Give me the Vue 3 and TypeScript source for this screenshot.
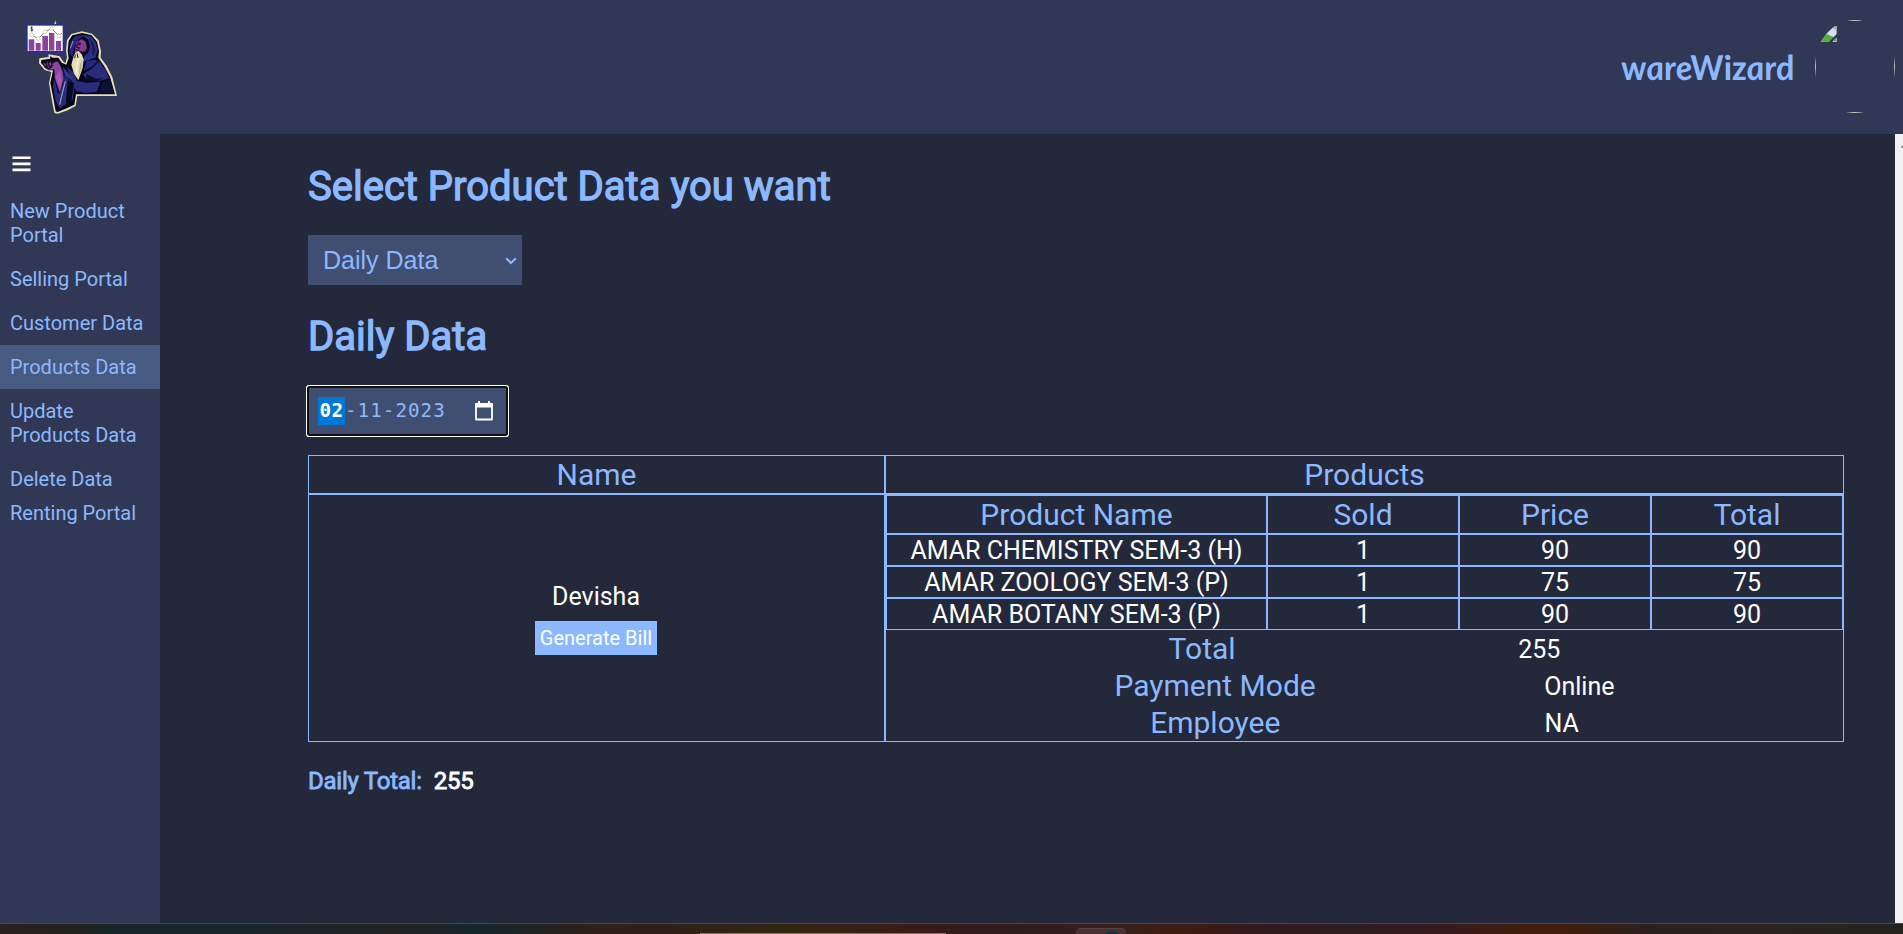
<script setup lang="ts">
import { ref } from 'vue'

interface NavItem {
  label: string
  active?: boolean
  compact?: boolean
}

interface ProductRow {
  name: string
  sold: number
  price: number
  total: number
}

const nav: NavItem[] = [
  { label: 'New Product Portal' },
  { label: 'Selling Portal' },
  { label: 'Customer Data' },
  { label: 'Products Data', active: true },
  { label: 'Update Products Data' },
  { label: 'Delete Data' },
  { label: 'Renting Portal', compact: true },
]

const range = ref('Daily Data')
const columns: string[] = ['Product Name', 'Sold', 'Price', 'Total']
const rows: ProductRow[] = [
  { name: 'AMAR CHEMISTRY SEM-3 (H)', sold: 1, price: 90, total: 90 },
  { name: 'AMAR ZOOLOGY SEM-3 (P)', sold: 1, price: 75, total: 75 },
  { name: 'AMAR BOTANY SEM-3 (P)', sold: 1, price: 90, total: 90 },
]
const summary: [string, string][] = [
  ['Total', '255'],
  ['Payment Mode', 'Online'],
  ['Employee', 'NA'],
]
</script>

<template>
  <div class="screen">
    <header class="topbar">
      <svg class="logo" viewBox="0 0 480 420" width="160" height="140">
        <!-- chart board -->
        <path d="M78 72h117v92H108l-30-6z" fill="#2e3180" />
        <rect x="83" y="77" width="105" height="76" fill="#fff" />
        <g fill="#8a449c">
          <rect x="86" y="118" width="17" height="34" />
          <rect x="107" y="129" width="15" height="23" />
          <rect x="127" y="108" width="17" height="44" />
          <rect x="147" y="99" width="16" height="53" />
          <rect x="168" y="123" width="15" height="29" />
        </g>
        <path d="M95 105l20 11 20-21 20-9 22 22 9-9" fill="none" stroke="#343a55" stroke-width="2" />
        <g fill="#fff" stroke="#d9d3ae" stroke-width="3">
          <circle cx="95" cy="104" r="5.500" /><circle cx="115" cy="116" r="5.500" />
          <circle cx="135" cy="95" r="5.500" /><circle cx="155" cy="86" r="5.500" />
          <circle cx="177" cy="108" r="5.500" />
        </g>
        <path d="M98 82h-5v4l5 2v4h-6M95 79v15" fill="none" stroke="#24305c" stroke-width="2.500" />
        <path d="M163 72l3-11 3 11z" fill="#d9d3ae" />
        <!-- cream outline -->
        <path d="M196 190L201 172 198 152 201 120 214 102 246 94 276 101 296 121 303 153 302 173 320 197 337 231 351 288H232L227 318 203 331 173 341 163 339 156 303 147 250 154 216 134 210 117 190 118 175 146 171 145 163 164 166 179 169 189 184z" fill="#e6dfb6" />
        <!-- robe -->
        <path d="M199 194L206 175 203 153 206 123 217 106 246 99 274 105 291 125 297 153 295 173 312 197 330 230 345 283H228L223 314 200 325 173 336 167 334 160 295 151 249 159 211 137 205 123 189 124 180 151 176 150 168 158 173 175 173 185 188z" fill="#05061a" />
        <path d="M207 157l5-32 13-17 29-3-19 14-14 26-4 28z" fill="#23277a" />
        <path d="M246 104l27 5 14 18 6 24-7 22-24 8-12 5 3-18 11-9 6-18-5-22-20-14z" fill="#2c2f86" />
        <path d="M266 112l14 17 6 24-9 17 1-28z" fill="#151846" />
        <path d="M298 184l18 25 12 26-24 7-45-3-10-16 28-19z" fill="#292c7d" />
        <path d="M260 182l26-3 8 4-18 17-26 14z" fill="#23277a" />
        <path d="M331 238l11 42h-44l9-33z" fill="#0c1032" />
        <path d="M200 200l19 15 12 28 29 5 41-3-11 31-35 3-27-5z" fill="#292c7d" />
        <path d="M260 222l28 14 23-1-24 9-30-4z" fill="#0a0c2b" />
        <path d="M163 233l11 48 13-26 4-29 17 13 17 11-7 51-39 24-12-21-8-47z" fill="#292c7d" />
        <path d="M203 241l19 8-8 56-17 7z" fill="#070922" />
        <path d="M196 244l-17 70 8-37z" fill="#a9a6b9" stroke="#a9a6b9" stroke-width="2" />
        <path d="M188 200l18 19 17 27-28-18z" fill="#34368c" />
        <!-- hand and arm -->
        <path d="M130 187l8 3 4-5 5 4 11-9-1 10 12-7 7 3 8 16 6 16 2 18-13 45-16-48-1-24-16 1-12-8z" fill="#8a459f" stroke="#0a0715" stroke-width="2" />
        <path d="M137 188l5 12m2-11l5 12m7-18l-2 18-9 6m-10-8l11 6m3-5l10-4" stroke="#1a0a22" stroke-width="4" fill="none" />
        <path d="M179 213l8 30-7 28-14-41z" fill="#a25bad" />
        <!-- face -->
        <path d="M224 151l5-24 16-10 12 8 4 20-7 10-11-1-17 6z" fill="#873a91" />
        <path d="M228 136l15-5m-11-2l10 1m-14 10l12 5m-14 3l12 4" stroke="#280d3b" stroke-width="4" fill="none" />
        <path d="M221 168l5-10 9-5 10 10 6 15-3 26-13 37-13-20-8-27z" fill="#e3dcb6" />
        <path d="M231 174l8-1-6 29 1 30-8-19z" fill="#f0eacb" />
        <path d="M247 177l-2 27-9 23 3-32z" fill="#bcb699" />
        <path d="M226 164l-2 11m7-15l3 14" stroke="#1a1534" stroke-width="3" />
        <path d="M211 145l8-22" stroke="#9199bc" stroke-width="3" />
      </svg>
      <div class="account">
        <span class="brand">wareWizard</span>
        <div class="avatar">
          <svg width="16" height="16" viewBox="0 0 16 16">
            <path d="M0 0h16v16H0z" fill="#d4def6" />
            <path d="M0 16v-4l6-4 4 2 3 1-4 5z" fill="#55ad3d" />
            <path d="M12.500 0v3.500H16V0z" fill="#aaa" />
            <path d="M15.500 2v14H0" fill="none" stroke="#a3a3a3" />
            <path d="M8.500 17L17 8.500" stroke="#313855" stroke-width="2.500" />
            <path d="M12 15l3-3v3z" fill="#62a855" />
          </svg>
        </div>
      </div>
    </header>

    <div class="body">
      <nav class="sidebar">
        <svg class="burger" width="20" height="18" viewBox="0 0 20 18">
          <path d="M.5 2.800h18M.5 8.900h18M.5 14.900h18" stroke="#fff" stroke-width="2.600" />
        </svg>
        <a v-for="item in nav" :key="item.label" :class="{ active: item.active, compact: item.compact }">{{ item.label }}</a>
      </nav>

      <main class="content">
        <h1>Select Product Data you want</h1>
        <div class="select">
          <span>{{ range }}</span>
          <svg width="12" height="8" viewBox="0 0 12 8">
            <path d="M1.200 1.200L6 6l4.800-4.800" fill="none" stroke="#8cb8ff" stroke-width="2" />
          </svg>
        </div>
        <h1 class="second">{{ range }}</h1>
        <div class="date">
          <span class="day">02</span><span class="rest">-11-2023</span>
          <svg width="18" height="20" viewBox="0 0 18 20">
            <path d="M1 3h16v15.500H1z" fill="none" stroke="#fff" stroke-width="1.800" stroke-linejoin="round" />
            <path d="M.5 2h17v4.500H.5zM3 0h2v3H3zM13 0h2v3h-2z" fill="#fff" />
          </svg>
        </div>

        <section class="report">
          <div class="cell title">Name</div>
          <div class="cell title">Products</div>
          <div class="cell customer">
            <span>Devisha</span>
            <button type="button">Generate Bill</button>
          </div>
          <div class="cell">
            <div class="line">
              <div v-for="c in columns" :key="c" class="cell title">{{ c }}</div>
            </div>
            <div v-for="r in rows" :key="r.name" class="line item">
              <div class="cell">{{ r.name }}</div>
              <div class="cell">{{ r.sold }}</div>
              <div class="cell">{{ r.price }}</div>
              <div class="cell">{{ r.total }}</div>
            </div>
            <div v-for="[label, value] in summary" :key="label" class="sum">
              <span class="label">{{ label }}</span>
              <span class="value">{{ value }}</span>
            </div>
          </div>
        </section>

        <p class="daily"><span>Daily Total:</span><b>255</b></p>
      </main>

      <div class="scrollbar">
        <svg width="2" height="3" viewBox="0 0 2 3"><path d="M0 3V1.500L2 0v3z" fill="#999" /></svg>
      </div>
    </div>

    <footer class="taskbar">
      <i class="search"></i>
      <i class="app"><i></i></i>
    </footer>
  </div>
</template>

<style>
body {
  overflow: hidden;
}
</style>

<style scoped>
* {
  box-sizing: border-box;
}
.screen {
  display: flex;
  flex-direction: column;
  width: 1903px;
  height: 934px;
  overflow: hidden;
  background: #23283b;
  color: #fff;
  font-family: Roboto, sans-serif;
}
.topbar {
  display: flex;
  justify-content: space-between;
  height: 134px;
  flex: none;
  padding-right: 8px;
  background: #313855;
}
.logo {
  display: block;
}
.account {
  display: flex;
}
.brand {
  margin: 47px 21px 0 0;
  height: 40px;
  line-height: 40px;
  color: #8cb8ff;
  font-family: Lato, sans-serif;
  font-size: 34.200px;
  font-weight: 700;
  font-style: italic;
  transform: skewX(7deg);
}
.avatar {
  position: relative;
  width: 80px;
  height: 93px;
  margin-top: 20px;
  border-radius: 50%;
  overflow: hidden;
}
.avatar::before {
  content: '';
  position: absolute;
  inset: 0;
  border: 1px solid #c5c2bb;
}
.avatar svg {
  display: block;
  margin: 6px;
}
.body {
  display: flex;
  height: 789px;
  flex: none;
}
.sidebar {
  width: 160px;
  flex: none;
  background: #313855;
}
.burger {
  display: block;
  margin: 21px 0 16px 12px;
}
.sidebar a {
  display: block;
  padding: 10px;
  color: #8cb8ff;
  font-size: 20px;
  line-height: 24px;
}
.sidebar a.active {
  background: #475a82;
}
.sidebar a.compact {
  padding: 0 10px;
}
.content {
  flex: 1;
  padding: 28px 0 0 148px;
}
h1 {
  margin: 0;
  height: 48px;
  line-height: 50px;
  color: #8cb8ff;
  font-size: 40px;
  font-weight: 400;
  -webkit-text-stroke: 1.300px #8cb8ff;
}
h1.second {
  margin-top: 27px;
}
.select {
  display: flex;
  align-items: center;
  justify-content: space-between;
  width: 214px;
  height: 50px;
  margin-top: 25px;
  padding: 1px 5px 0 15px;
  background: #404e71;
  color: #8cb8ff;
  font: 25px 'Liberation Sans', sans-serif;
}
.date {
  display: flex;
  align-items: center;
  width: 197px;
  height: 46px;
  margin: 28px 0 0 1px;
  padding-left: 9px;
  background: #404e71;
  box-shadow: 0 0 0 2px #101010, 0 0 0 3px #fff;
  border-radius: 1px;
  color: #8cb8ff;
  font: 19.200px/28px 'DejaVu Sans Mono', monospace;
  white-space: nowrap;
}
.day {
  width: 27px;
  height: 28px;
  padding-left: 1.500px;
  background: #0078d7;
  color: #fff;
  font-weight: 700;
  letter-spacing: 0.540px;
}
.rest {
  width: 101px;
  letter-spacing: 1.050px;
}
.date svg {
  margin-left: 29px;
}
.report {
  display: grid;
  grid-template-columns: 577px 959px;
  width: 1536px;
  margin-top: 21px;
}
.cell {
  border: 1px solid #8cb8ff;
}
.title {
  height: 39px;
  line-height: 37px;
  text-align: center;
  color: #8cb8ff;
  font-size: 30px;
}
.customer {
  display: flex;
  flex-direction: column;
  align-items: center;
  padding: 87px 1px 0 0;
  font-size: 25px;
  line-height: 30px;
}
.customer button {
  width: 122px;
  height: 34px;
  margin-top: 9px;
  padding: 0;
  border: 0;
  background: #8cb8ff;
  color: #fff;
  font: 20px Roboto, sans-serif;
}
.line {
  display: grid;
  grid-template-columns: 381px repeat(3, 192px);
}
.item {
  height: 32px;
  line-height: 32px;
  text-align: center;
  font-size: 25px;
}
.item .cell {
  height: 32px;
}
.sum {
  display: flex;
  align-items: center;
  justify-content: space-evenly;
  height: 37px;
  line-height: 37px;
  font-size: 25px;
}
.sum .label {
  color: #8cb8ff;
  font-size: 30px;
}
.sum .value {
  padding-top: 1px;
}
.daily {
  display: flex;
  gap: 12px;
  margin: 24px 0 0;
  font-size: 24px;
  line-height: 30px;
}
.daily span {
  color: #8cb8ff;
  letter-spacing: -0.250px;
  -webkit-text-stroke: 0.800px #8cb8ff;
}
.daily b {
  font-weight: 400;
  letter-spacing: -0.200px;
  -webkit-text-stroke: 0.800px #fff;
}
.scrollbar {
  width: 8px;
  flex: none;
  background: #f1f1f1;
}
.scrollbar svg {
  display: block;
  margin: 11px 0 0 6px;
}
.taskbar {
  display: flex;
  align-items: flex-end;
  flex: 1;
  border-top: 1px solid #48464a;
  background: linear-gradient(90deg, #2a201f 0, #20221e 80px, #16262a 120px, #16262a 230px, #232324 400px, #14262a 480px, #302018 600px, #2f1f18 660px, #33260f 790px, #381b17 910px, #2e1c1c 1020px, #38201a 1130px, #3f1c10 1180px, #31191d 1260px, #2e1d20 1350px, #361a1e 1440px, #401d0c 1520px, #401d0c 1570px, #2d201c 1640px, #2b241d 1750px, #24221e 1903px);
}
.search {
  width: 246px;
  height: 1px;
  margin-left: 700px;
  background: #8d7068;
}
.app {
  display: flex;
  align-items: flex-end;
  width: 50px;
  height: 6px;
  margin-left: 130px;
  padding-left: 30px;
  border-top: 1px solid #5a403d;
  border-radius: 5px 5px 0 0;
  background: #49312f;
}
.app i {
  width: 12px;
  height: 3px;
  border-radius: 6px 6px 0 0;
  background: #163448;
}
</style>
